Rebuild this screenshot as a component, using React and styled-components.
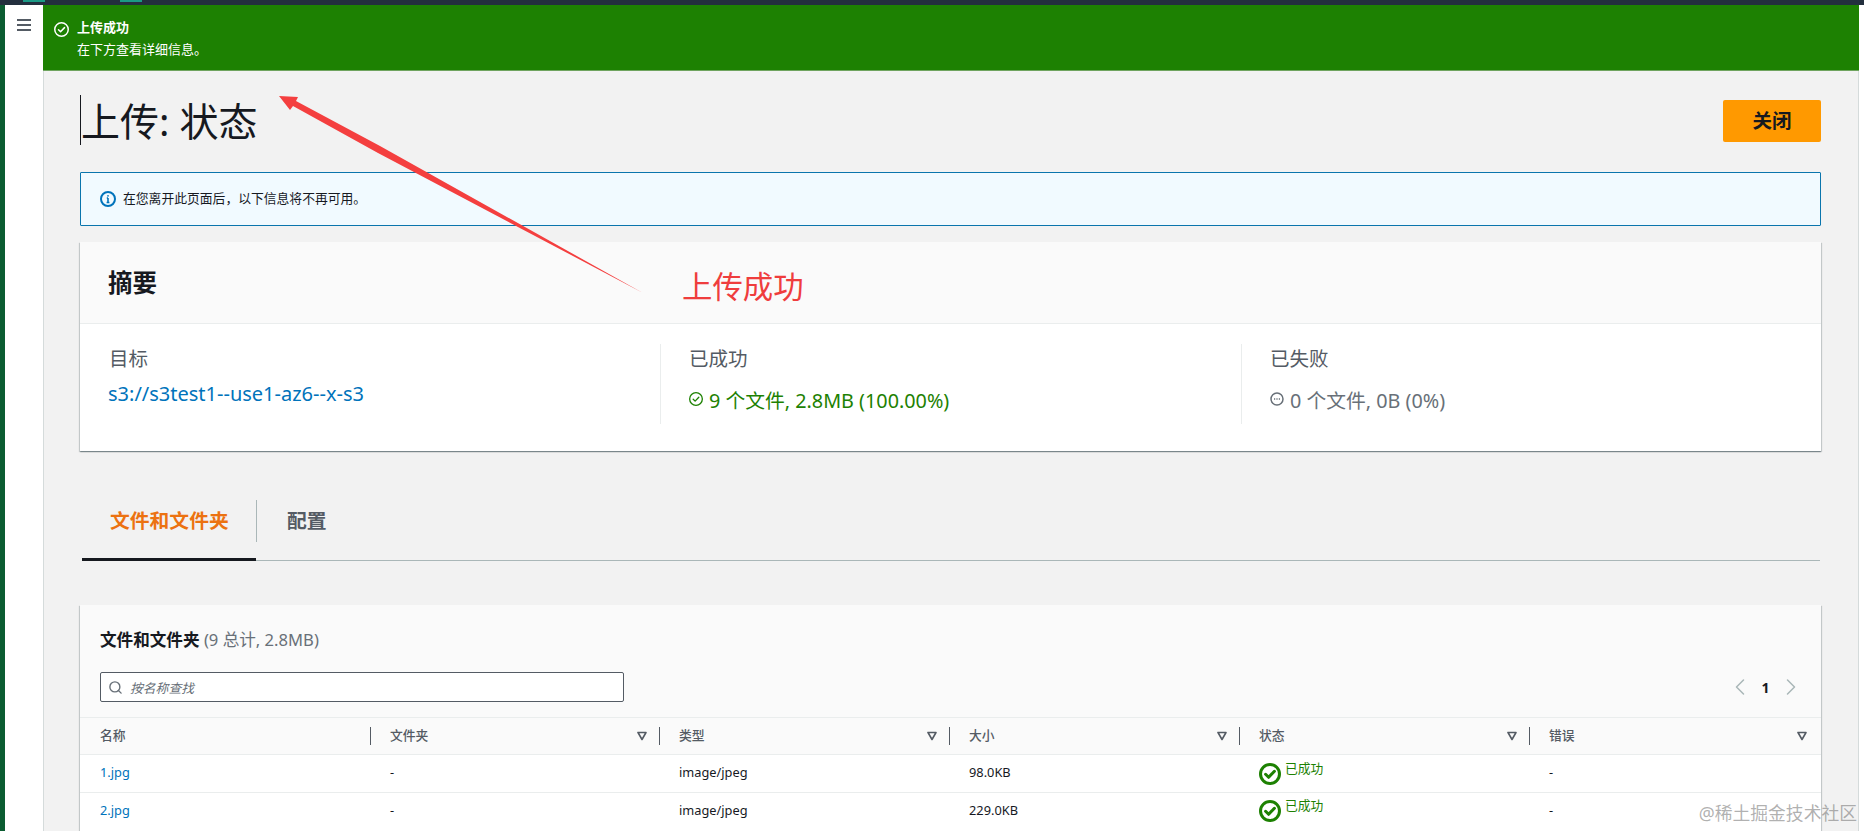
import React from "react";
import styled, { createGlobalStyle } from "styled-components";
import { Search, ChevronLeft, ChevronRight } from "lucide-react";

const fontStack = `"Noto Sans", "Noto Sans CJK SC", sans-serif`;

const GlobalStyle = createGlobalStyle`
  html, body {
    margin: 0;
    padding: 0;
    height: 831px;
    overflow: hidden;
    background: #fff;
    font-family: ${fontStack};
    color: #16191f;
  }
  * { box-sizing: border-box; }
`;

const Page = styled.div`
  position: relative;
  width: 1864px;
  height: 831px;
  overflow: hidden;
  display: flex;
  flex-direction: column;
`;

const TopStrip = styled.div`
  height: 5px;
  flex: none;
  background: #232f3e;
  display: flex;
  padding-left: 23px;
  gap: 75px;
  span { width: 22px; height: 2px; background: #1b9a86; }
`;

const Shell = styled.div`
  flex: 1;
  display: flex;
  min-height: 0;
`;

const LeftStrip = styled.div`
  width: 5px;
  background: #0b5c31;
`;

const Nav = styled.div`
  width: 38px;
  background: #fff;
  padding: 13px 0 0 12px;
  color: #545b64;
  svg { display: block; }
`;

const Main = styled.main`
  flex: 1;
  min-width: 0;
  background: #f2f2f2;
  border-left: 1px solid #d5dbdb;
  border-right: 1px solid #d5dbdb;
  margin-right: 5px;
`;

const Banner = styled.div`
  height: 66px;
  background: #1d8102;
  color: #fff;
  display: flex;
  padding: 11px 0 0 11px;
  gap: 8px;
  border-bottom: 1px solid #6fa45f;
  margin: 0 -1px;
  svg { margin-top: 6px; }
`;

const BannerText = styled.div`
  font-size: 13px;
  line-height: 22px;
  strong { display: block; font-weight: 700; }
`;

const Content = styled.div`
  padding: 29px 37px 0 36px;
`;

const TitleRow = styled.div`
  display: flex;
  justify-content: space-between;
  align-items: flex-start;
  height: 42px;
`;

const Title = styled.h1`
  margin: -5px 0 0;
  font-size: 39px;
  line-height: 52px;
  font-weight: 400;
  border-left: 1px solid #16191f;
  height: 50px;
`;

const PrimaryButton = styled.button`
  width: 98px;
  height: 42px;
  border: none;
  border-radius: 2px;
  background: #ff9900;
  color: #16191f;
  font-family: inherit;
  font-size: 19.5px;
  font-weight: 700;
  padding: 0 0 4px;
`;

const InfoBox = styled.div`
  margin-top: 30px;
  height: 54px;
  border: 1px solid #0a75ad;
  border-radius: 1px;
  background: #f1faff;
  display: flex;
  align-items: center;
  padding-left: 19px;
  gap: 7px;
  font-size: 12.8px;
  color: #16191f;
  span { margin-top: -3px; }
`;

const Card = styled.section`
  background: #fff;
  box-shadow: 0 1px 1px 0 rgba(0, 28, 36, 0.3), 1px 1px 1px 0 rgba(0, 28, 36, 0.15), -1px 1px 1px 0 rgba(0, 28, 36, 0.15);
`;

const SummaryCard = styled(Card)`
  margin-top: 16px;
  height: 209px;
`;

const SummaryHeader = styled.div`
  height: 82px;
  background: #fafafa;
  border-bottom: 1px solid #eaeded;
  padding: 0 0 2px 28px;
  display: flex;
  align-items: center;
  font-size: 24.5px;
  font-weight: 700;
`;

const SummaryBody = styled.div`
  display: grid;
  grid-template-columns: 580px 581px 1fr;
  padding-top: 20px;
`;

const SummaryCol = styled.div`
  height: 80px;
  padding: 1px 0 0 ${({ $first }) => ($first ? "29px" : "28px")};
  border-left: ${({ $first }) => ($first ? "none" : "1px solid #eaeded")};
`;

const SummaryLabel = styled.div`
  font-size: 19.5px;
  line-height: 28px;
  color: #545b64;
`;

const SummaryLink = styled.div`
  margin: 7px 0 0 -1px;
  font-size: 20px;
  line-height: 28px;
  color: #0073bb;
`;

const SummaryValue = styled.div`
  margin-top: 14px;
  font-size: 19.8px;
  line-height: 28px;
  color: ${({ $tone }) => $tone};
  display: flex;
  align-items: center;
  gap: 6px;
  svg { margin-top: -5px; }
`;

const Tabs = styled.div`
  margin-top: 49px;
  height: 61px;
  margin-left: 2px;
  margin-right: 1px;
  border-bottom: 1px solid #aab7b8;
  display: flex;
`;

const Tab = styled.div`
  height: 61px;
  width: ${({ $active }) => ($active ? "174px" : "auto")};
  padding: 9px 0 0 ${({ $active }) => ($active ? "28px" : "30px")};
  font-size: 19.8px;
  line-height: 24px;
  font-weight: 700;
  color: ${({ $active }) => ($active ? "#ec7211" : "#545b64")};
  border-bottom: ${({ $active }) => ($active ? "3px solid #16191f" : "none")};
`;

const TabDivider = styled.div`
  width: 1px;
  height: 42px;
  background: #aab7b8;
`;

const TableCard = styled(Card)`
  margin-top: 44px;
  height: 240px;
`;

const TableTop = styled.div`
  height: 112px;
  background: #fafafa;
  padding: 23px 0 0 20px;
`;

const TableTitle = styled.div`
  font-size: 16.6px;
  line-height: 24px;
  font-weight: 700;
  span { font-weight: 400; color: #687078; }
`;

const Toolbar = styled.div`
  margin-top: 20px;
  display: flex;
  justify-content: space-between;
  align-items: center;
  padding-right: 16px;
`;

const SearchBox = styled.div`
  width: 524px;
  height: 30px;
  background: #fff;
  border: 1px solid #545b64;
  border-radius: 2px;
  display: flex;
  align-items: center;
  padding-left: 7px;
  gap: 7px;
  color: #687078;
  font-size: 12.8px;
  font-style: italic;
`;

const Pager = styled.div`
  display: flex;
  align-items: center;
  gap: 2px;
  color: #aab7b8;
  b { color: #16191f; font-size: 14px; font-weight: 700; width: 19px; text-align: center; }
`;

const Row = styled.div`
  display: grid;
  grid-template-columns: 291px 289px 290px 290px 290px 1fr;
  height: ${({ $h }) => $h}px;
  background: ${({ $head }) => ($head ? "#fafafa" : "#fff")};
  border-top: 1px solid #eaeded;
  align-items: center;
  font-size: 12.8px;
`;

const HeadCell = styled.div`
  height: 18px;
  display: flex;
  align-items: center;
  justify-content: space-between;
  padding: 0 ${({ $last }) => ($last ? "14px" : "12px")} 0 ${({ $first }) => ($first ? "20px" : "19px")};
  font-weight: 500;
  color: #545b64;
  border-right: ${({ $last }) => ($last ? "none" : "1px solid #545b64")};
  span { margin-top: -4px; }
`;

const Cell = styled.div`
  padding: 0 0 3px ${({ $first }) => ($first ? "20px" : "19px")};
  color: ${({ $link }) => ($link ? "#0073bb" : "#16191f")};
`;

const StatusCell = styled.div`
  padding-left: 19px;
  display: flex;
  align-items: flex-start;
  gap: 4px;
  color: #1d8102;
  span { margin-top: -4px; line-height: 18px; }
`;

const Annotation = styled.div`
  position: absolute;
  left: 682px;
  top: 266px;
  font-size: 30.4px;
  line-height: 42px;
  color: #ef3d3d;
`;

const ArrowSvg = styled.svg`
  position: absolute;
  left: 0;
  top: 0;
`;

const Watermark = styled.div`
  position: absolute;
  right: 7px;
  bottom: 7px;
  font-size: 17.8px;
  line-height: 22px;
  color: rgba(110, 110, 110, 0.55);
`;

const CheckCircle = ({ size = 16, sw = 2 }) => (
  <svg width={size} height={size} viewBox="0 0 16 16" fill="none" stroke="currentColor" strokeWidth={sw} strokeLinecap="round" strokeLinejoin="round">
    <circle cx="8" cy="8" r={8 - sw / 2} />
    <path d="M4.8 8.2l2.2 2.2 4.2-4.4" />
  </svg>
);

const InfoIcon = () => (
  <svg width="16" height="16" viewBox="0 0 16 16" fill="none" stroke="#0073bb" strokeWidth="2">
    <circle cx="8" cy="8" r="7" />
    <path d="M8 7v4.5M6.6 11.5h2.8M6.8 7h1.2" strokeWidth="1.6" />
    <path d="M8 4.2v1.4" strokeWidth="1.8" />
  </svg>
);

const MenuIcon = () => (
  <svg width="14" height="14" viewBox="0 0 14 14" stroke="currentColor" strokeWidth="2">
    <path d="M0 2h14M0 7h14M0 12h14" />
  </svg>
);

const PendingIcon = () => (
  <svg width="14" height="14" viewBox="0 0 14 14" fill="none" stroke="#687078" strokeWidth="1.5">
    <circle cx="7" cy="7" r="6" />
    <path d="M4 7h6" strokeWidth="1.6" strokeDasharray="1.2 1.2" />
  </svg>
);

const FilterIcon = () => (
  <svg width="10" height="10" viewBox="0 0 10 10" fill="none" stroke="#545b64" strokeWidth="1.6" strokeLinejoin="round">
    <path d="M1 1.5h8L5 8.5z" />
  </svg>
);

const columns = ["名称", "文件夹", "类型", "大小", "状态", "错误"];

const files = [
  { name: "1.jpg", size: "98.0KB", h: 38 },
  { name: "2.jpg", size: "229.0KB", h: 37 },
];

export default function App() {
  return (
    <Page>
      <GlobalStyle />
      <TopStrip>
        <span />
        <span />
      </TopStrip>
      <Shell>
        <LeftStrip />
        <Nav>
          <MenuIcon />
        </Nav>
        <Main>
          <Banner>
            <CheckCircle size={15} sw={1.6} />
            <BannerText>
              <strong>上传成功</strong>
              在下方查看详细信息。
            </BannerText>
          </Banner>
          <Content>
            <TitleRow>
              <Title>上传: 状态</Title>
              <PrimaryButton>关闭</PrimaryButton>
            </TitleRow>
            <InfoBox>
              <InfoIcon />
              <span>在您离开此页面后，以下信息将不再可用。</span>
            </InfoBox>
            <SummaryCard>
              <SummaryHeader>摘要</SummaryHeader>
              <SummaryBody>
                <SummaryCol $first>
                  <SummaryLabel>目标</SummaryLabel>
                  <SummaryLink>s3://s3test1--use1-az6--x-s3</SummaryLink>
                </SummaryCol>
                <SummaryCol>
                  <SummaryLabel>已成功</SummaryLabel>
                  <SummaryValue $tone="#1d8102">
                    <CheckCircle size={14} sw={1.5} />9 个文件, 2.8MB (100.00%)
                  </SummaryValue>
                </SummaryCol>
                <SummaryCol>
                  <SummaryLabel>已失败</SummaryLabel>
                  <SummaryValue $tone="#687078">
                    <PendingIcon />0 个文件, 0B (0%)
                  </SummaryValue>
                </SummaryCol>
              </SummaryBody>
            </SummaryCard>
            <Tabs>
              <Tab $active>文件和文件夹</Tab>
              <TabDivider />
              <Tab>配置</Tab>
            </Tabs>
            <TableCard>
              <TableTop>
                <TableTitle>
                  文件和文件夹 <span>(9 总计, 2.8MB)</span>
                </TableTitle>
                <Toolbar>
                  <SearchBox>
                    <Search size={15} strokeWidth={2.2} />
                    按名称查找
                  </SearchBox>
                  <Pager>
                    <ChevronLeft size={28} strokeWidth={1.3} />
                    <b>1</b>
                    <ChevronRight size={28} strokeWidth={1.3} />
                  </Pager>
                </Toolbar>
              </TableTop>
              <Row $head $h={37}>
                {columns.map((col, i) => (
                  <HeadCell key={col} $first={i === 0} $last={i === columns.length - 1}>
                    <span>{col}</span>
                    {i > 0 && <FilterIcon />}
                  </HeadCell>
                ))}
              </Row>
              {files.map((file) => (
                <Row key={file.name} $h={file.h}>
                  <Cell $first $link>{file.name}</Cell>
                  <Cell>-</Cell>
                  <Cell>image/jpeg</Cell>
                  <Cell>{file.size}</Cell>
                  <StatusCell>
                    <CheckCircle size={22} sw={2.2} />
                    <span>已成功</span>
                  </StatusCell>
                  <Cell>-</Cell>
                </Row>
              ))}
            </TableCard>
          </Content>
        </Main>
      </Shell>
      <ArrowSvg width="1864" height="831" viewBox="0 0 1864 831">
        <polygon points="279,96 298,97 296,101 380,146 643,293 378,153 293,106 290,110" fill="#f43f3f" />
      </ArrowSvg>
      <Annotation>上传成功</Annotation>
      <Watermark>@稀土掘金技术社区</Watermark>
    </Page>
  );
}
